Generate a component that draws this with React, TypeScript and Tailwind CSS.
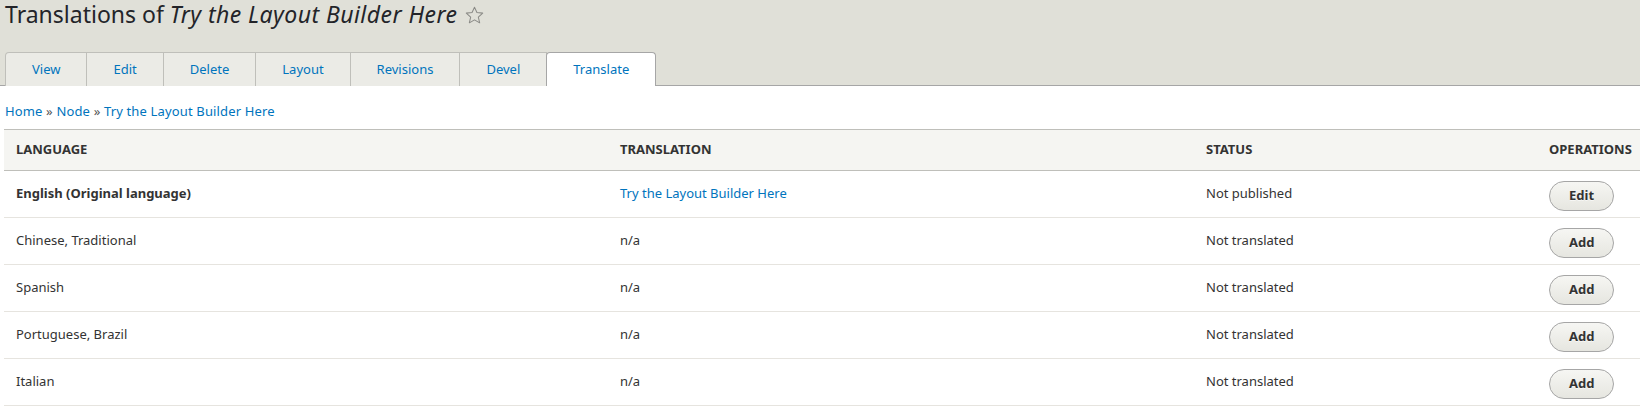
const tabs = ["View", "Edit", "Delete", "Layout", "Revisions", "Devel"];

const rows = [
  { lang: "English (Original language)", original: true, translation: "Try the Layout Builder Here", status: "Not published", op: "Edit" },
  { lang: "Chinese, Traditional", original: false, translation: "n/a", status: "Not translated", op: "Add" },
  { lang: "Spanish", original: false, translation: "n/a", status: "Not translated", op: "Add" },
  { lang: "Portuguese, Brazil", original: false, translation: "n/a", status: "Not translated", op: "Add" },
  { lang: "Italian", original: false, translation: "n/a", status: "Not translated", op: "Add" },
];

function Star() {
  return (
    <svg width="19" height="18" viewBox="0 0 24 23" className="ml-[7px] mt-[1px]" aria-hidden>
      <path
        d="M12 1.5l3.1 6.9 7.4.7-5.6 5 1.7 7.4L12 17.7l-6.6 3.8 1.7-7.4-5.6-5 7.4-.7z"
        fill="none"
        stroke="#8a8a86"
        strokeWidth="1.3"
        strokeLinejoin="round"
      />
    </svg>
  );
}

export default function App() {
  return (
    <div className="min-h-[412px] bg-white text-[13px] text-[#333] font-['Noto_Sans','Open_Sans',sans-serif]">
      <div className="bg-[#e0e0d8] border-b border-[#a6a6a6] px-[5px]">
        <h1 className="flex items-center h-[28px] text-[23px] leading-[28px] font-normal text-[#232429]">
          <span>Translations of&nbsp;</span>
          <em className="italic tracking-[0.45px]">Try the Layout Builder Here</em>
          <Star />
        </h1>
        <ul className="flex items-end mt-[24px] -mb-px">
          {tabs.map((t, i) => (
            <li
              key={t}
              className={`h-[34px] flex items-center px-[26px] bg-[#ebebe6] border-t border-r border-[#bfbfba] ${i === 0 ? "border-l rounded-tl-[4px]" : ""}`}
            >
              <a className="text-[#0074bd] leading-none">{t}</a>
            </li>
          ))}
          <li className="h-[34px] flex items-center px-[26px] bg-white border-t border-r border-l border-[#a6a6a6] -ml-px rounded-t-[4px] relative">
            <a className="text-[#0074bd] leading-none">Translate</a>
          </li>
        </ul>
      </div>

      <div className="px-[5px] pt-[15px] h-[43px] leading-[20px] tracking-[0.15px]">
        <a className="text-[#0074bd]">Home</a>
        <span className="text-[#555]"> » </span>
        <a className="text-[#0074bd]">Node</a>
        <span className="text-[#555]"> » </span>
        <a className="text-[#0074bd]">Try the Layout Builder Here</a>
      </div>

      <div className="pl-[4px]">
        <table className="w-full border-collapse table-fixed">
          <colgroup>
            <col className="w-[604px]" />
            <col className="w-[586px]" />
            <col className="w-[343px]" />
            <col />
          </colgroup>
          <thead>
            <tr className="bg-[#f5f5f2] border-t border-b border-[#bfbfba] h-[41px]">
              {["Language", "Translation", "Status", "Operations"].map((h) => (
                <th key={h} className="text-left px-[12px] font-bold uppercase text-[#333] whitespace-nowrap">
                  {h}
                </th>
              ))}
            </tr>
          </thead>
          <tbody>
            {rows.map((r) => (
              <tr key={r.lang} className="border-b border-[#e6e4df] h-[47px]">
                <td className={`px-[12px] ${r.original ? "font-bold" : ""}`}>{r.lang}</td>
                <td className="px-[12px]">
                  {r.original ? <a className="text-[#0074bd]">{r.translation}</a> : r.translation}
                </td>
                <td className="px-[12px]">{r.status}</td>
                <td className="px-[12px]">
                  <button className="h-[30px] px-[19px] mt-[3px] rounded-full border border-[#a6a6a6] bg-linear-to-b from-[#f6f6f3] to-[#e6e6e0] font-bold text-[#333] leading-none [text-shadow:0_1px_rgba(255,255,255,0.6)]">
                    {r.op}
                  </button>
                </td>
              </tr>
            ))}
          </tbody>
        </table>
      </div>
    </div>
  );
}
